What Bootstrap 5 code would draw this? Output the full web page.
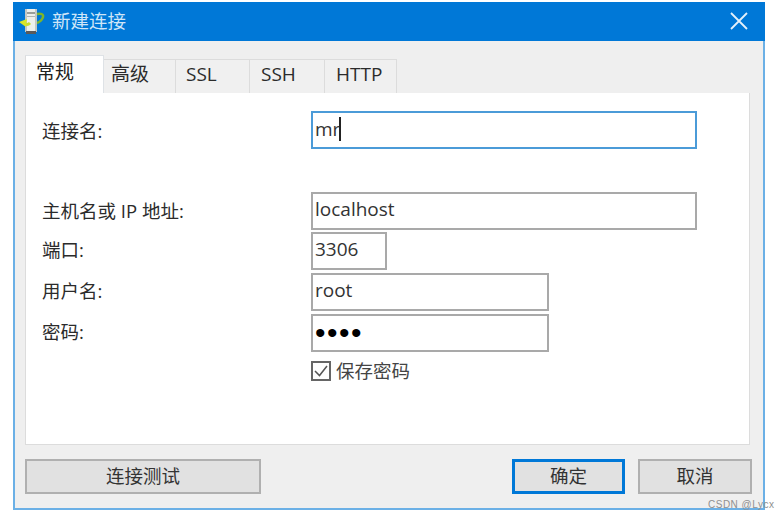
<!DOCTYPE html>
<html lang="zh-CN">
<head>
  <meta charset="UTF-8">
  <meta name="viewport" content="width=device-width, initial-scale=1.0">
  <title>新建连接</title>
  <link href="https://cdn.jsdelivr.net/npm/bootstrap@5.3.0/dist/css/bootstrap.min.css" rel="stylesheet">
  <style>
    body {
      background: #fff;
      color: #2b2b2b;
      font-family: "Open Sans", "Noto Sans CJK SC", sans-serif;
      font-size: 18.5px;
      overflow: hidden;
    }
    .conn-window {
      width: 752px;
      height: 508px;
      margin: 2px 0 0 13px;
      background: #efefef;
      border: 2px solid #6bb0e6;
      border-top: 0;
    }
    .conn-title {
      height: 39px;
      margin: 0 -2px;
      padding: 0 17px 2px 6px;
      background: #0078d7;
      color: #cfe6f8;
      font-size: 18.5px;
    }
    .title-text { margin-left: 3px; }
    .conn-body { padding: 14px 13px 0 10px; }
    .conn-tabs { --bs-nav-tabs-border-width: 0; height: 38px; align-items: flex-end; }
    .conn-tabs .nav-link {
      height: 34px;
      padding: 0 0 4px;
      display: flex;
      align-items: center;
      margin: 0;
      color: #2b2b2b;
      background: #f0f0f0;
      border: 1px solid #dcdcdc;
      border-bottom: 0;
      border-left: 0;
      border-radius: 0;
      font-size: 19px;
      line-height: 1;
    }
    .conn-tabs .nav-link.active {
      height: 38px;
      color: #222;
      background: #fff;
      border-left: 1px solid #dcdcdc;
      padding-bottom: 4px;
    }
    .conn-tabs .tab-general { width: 79px; padding-left: 10px; }
    .conn-tabs .tab-advanced { width: 72px; padding-left: 7px; }
    .conn-tabs .tab-ssl { width: 74px; padding-left: 10px; }
    .conn-tabs .tab-ssh { width: 75px; padding-left: 11px; }
    .conn-tabs .tab-http { width: 72px; padding-left: 11px; }
    .conn-panel {
      width: 725px;
      height: 352px;
      padding: 18px 17px 0 16px;
      background: #fff;
      border: 1px solid #dcdcdc;
      border-top: 0;
    }
    .field-row { margin-bottom: 3px; }
    .field-row.first-row { margin-bottom: 43px; }
    .field-row.host-row { margin-bottom: 2px; }
    .field-label { width: 269px; flex: none; padding-bottom: 2px; }
    .first-row .field-label { padding: 2px 0 0; }
    .host-row .field-label { padding: 0; }
    .conn-input {
      height: 38px;
      padding: 0 2px 4px;
      border: 2px solid #a9a9a9;
      border-radius: 0;
      color: #333;
      font-size: 19px;
      line-height: 1;
      box-shadow: none;
    }
    .conn-input:focus { border-color: #a9a9a9; box-shadow: none; }
    .conn-input.is-focused { border-color: #4b9bd8; display: flex; align-items: center; padding-bottom: 2px; }
    .w-long { width: 386px; }
    .w-port { width: 76px; }
    .w-mid { width: 238px; }
    .text-caret { display: inline-block; width: 2px; height: 24px; background: #222; margin-left: -1px; }
    .conn-input[type=password] {
      padding-bottom: 0;
      font-size: 30px;
      letter-spacing: 1.5px;
      color: #000;
      font-family: "Liberation Sans", sans-serif;
    }
    .save-row { margin-left: 269px; margin-top: 9px; gap: 5px; height: 20px; color: #444; }
    .save-box { width: 20px; height: 20px; flex: none; }
    .conn-footer { margin-top: 14px; width: 727px; }
    .conn-btn {
      height: 35px;
      padding: 0;
      background: #e1e1e1;
      border: 2px solid #b0b0b0;
      border-radius: 0;
      color: #333;
      font-size: 18.5px;
      line-height: 1;
    }
    .conn-btn.default-btn { border: 3px solid #0078d7; }
    .btn-test { width: 236px; }
    .btn-ok { width: 113px; margin-right: 13px; }
    .btn-cancel { width: 114px; }
    .watermark {
      position: absolute;
      left: 708px;
      top: 497px;
      font-size: 10px;
      letter-spacing: .5px;
      color: #8f8f8f;
      font-family: "Liberation Sans", sans-serif;
    }
  </style>
</head>
<body>

<div class="conn-window">
  <div class="conn-title d-flex align-items-center">
    <svg width="30" height="30" viewBox="0 0 30 30">
      <!-- server tower with a green arrow looping round it -->
      <path d="M18 8 Q25 7 24 11 Q23 15 18 17" fill="none" stroke="#7fb52a" stroke-width="2.5"/>
      <rect x="6" y="3" width="12" height="23" fill="#c4c8c4"/>
      <rect x="8" y="3" width="8" height="23" fill="#eef0ec"/>
      <rect x="8" y="6" width="8" height="2" fill="#9a9f9a"/>
      <rect x="8" y="10" width="8" height="1" fill="#b2b6b2"/>
      <rect x="7" y="25" width="10" height="3" fill="#5a5a5a"/>
      <path d="M11 17 Q8 20 5 17" fill="none" stroke="#c8dc2c" stroke-width="3"/>
      <path d="M0 16 L8 13 L7 21 Z" fill="#d8e62a"/>
    </svg>
    <span class="title-text">新建连接</span>
    <svg width="18" height="18" viewBox="0 0 18 18" class="ms-auto">
      <path d="M1 1 L17 17 M17 1 L1 17" stroke="#e4f1fb" stroke-width="1.8" fill="none"/>
    </svg>
  </div>

  <div class="conn-body">
    <ul class="nav nav-tabs conn-tabs">
      <li class="nav-item"><a class="nav-link active tab-general" href="#">常规</a></li>
      <li class="nav-item"><a class="nav-link tab-advanced" href="#">高级</a></li>
      <li class="nav-item"><a class="nav-link tab-ssl" href="#">SSL</a></li>
      <li class="nav-item"><a class="nav-link tab-ssh" href="#">SSH</a></li>
      <li class="nav-item"><a class="nav-link tab-http" href="#">HTTP</a></li>
    </ul>

    <div class="conn-panel">
      <div class="d-flex align-items-center field-row first-row">
        <label class="field-label">连接名:</label>
        <div class="form-control conn-input is-focused w-long">mr<span class="text-caret"></span></div>
      </div>
      <div class="d-flex align-items-center field-row host-row">
        <label class="field-label">主机名或 IP 地址:</label>
        <input class="form-control conn-input w-long" type="text" value="localhost">
      </div>
      <div class="d-flex align-items-center field-row">
        <label class="field-label">端口:</label>
        <input class="form-control conn-input w-port" type="text" value="3306">
      </div>
      <div class="d-flex align-items-center field-row">
        <label class="field-label">用户名:</label>
        <input class="form-control conn-input w-mid" type="text" value="root">
      </div>
      <div class="d-flex align-items-center field-row">
        <label class="field-label">密码:</label>
        <input class="form-control conn-input w-mid" type="password" value="1234">
      </div>
      <div class="d-flex align-items-center save-row">
        <svg class="save-box" viewBox="0 0 20 20">
          <rect x="1" y="1" width="18" height="18" fill="#fff" stroke="#666" stroke-width="2"/>
          <path d="M4 10 L8.5 14.5 L16 5" stroke="#555" stroke-width="1.5" fill="none"/>
        </svg>
        <span>保存密码</span>
      </div>
    </div>

    <div class="d-flex conn-footer">
      <button type="button" class="btn conn-btn btn-test">连接测试</button>
      <button type="button" class="btn conn-btn default-btn btn-ok ms-auto">确定</button>
      <button type="button" class="btn conn-btn btn-cancel">取消</button>
    </div>
  </div>
</div>
<div class="watermark">CSDN @Lycx</div>

<script src="https://cdn.jsdelivr.net/npm/bootstrap@5.3.0/dist/js/bootstrap.bundle.min.js"></script>
</body>
</html>
